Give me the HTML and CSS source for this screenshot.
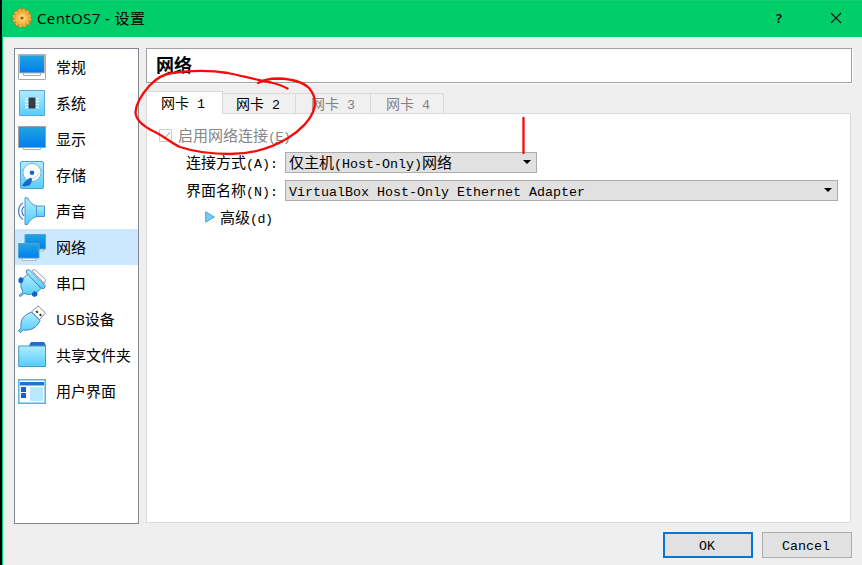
FILE: index.html
```html
<!DOCTYPE html>
<html lang="zh-CN">
<head>
<meta charset="utf-8">
<title>CentOS7 - 设置</title>
<link rel="stylesheet" href="styles.css">
</head>
<body>
<svg class="defs" width="0" height="0" aria-hidden="true">
  <defs>
    <linearGradient id="screen" x1="0" y1="0" x2="0" y2="1"><stop offset="0" stop-color="#22a5df"/><stop offset="1" stop-color="#007df0"/></linearGradient>
    <linearGradient id="light" x1="0" y1="0" x2="0" y2="1"><stop offset="0" stop-color="#b0ecff"/><stop offset="1" stop-color="#55cdff"/></linearGradient>
  </defs>
</svg>
<div class="window">
  <header class="titlebar">
    <svg class="app-icon" width="20" height="20" viewBox="0 0 20 20">
      <circle cx="10" cy="10" r="8.200" fill="none" stroke="#d9701c" stroke-width="3" stroke-dasharray="3.600 .693"/>
      <circle cx="10" cy="10" r="8" fill="none" stroke="#ffb545" stroke-width="2" stroke-dasharray="2.900 1.289"/>
      <circle cx="10" cy="10" r="7" fill="#ffb941" stroke="#f5a233"/>
      <circle cx="10" cy="10" r="4.500" fill="#ffd06c" stroke="#f8b54c"/>
      <circle cx="10" cy="10" r="1.600" fill="#a8521c"/>
    </svg>
    <h1 class="title">CentOS7 - 设置</h1>
    <span class="help">?</span>
    <svg class="close" width="12" height="12" viewBox="0 0 12 12"><path d="M1 1l10 10M11 1L1 11" stroke="#111" stroke-width="1.100"/></svg>
  </header>
  <div class="content">
    <nav class="sidebar">
      <a class="item"><svg width="28" height="28" viewBox="0 0 28 28"><path d="M.5 1.500h27v25H.5z" fill="#fff" stroke="#a8a8a8"/><path d="M1.500 2h25v18h-25z" fill="url(#screen)" stroke="#c2b9b2"/><path d="M5.500 20.500v2h17v-2" fill="none" stroke="#aaa"/></svg>常规</a>
      <a class="item"><svg width="28" height="28" viewBox="0 0 28 28"><path d="M1.500 1.500h25v25h-25z" fill="url(#light)" stroke="#5ca6d8"/><path d="M7 9.500h14M7 12.500h14M7 15.500h14M7 18.500h14" stroke="#e8faff" stroke-width="1.300"/><path d="M10.500 8.500h7v11h-7z" fill="#353d48"/></svg>系统</a>
      <a class="item"><svg width="28" height="28" viewBox="0 0 28 28"><path d="M5.500 21h17v3.500h-17z" fill="#fff" stroke="#aaa"/><path d="M.5 1.500h27v21H.5z" fill="url(#screen)" stroke="#9ba0a5"/></svg>显示</a>
      <a class="item"><svg width="28" height="28" viewBox="0 0 28 28"><rect x="2.500" y=".5" width="23" height="27" rx="1.500" fill="url(#light)" stroke="#4f9fd8"/><circle cx="14" cy="11.500" r="9" fill="#fff" stroke="#78b7db"/><path d="M13 16.500c-2 .5-5 3-6.500 4.500L4 24.500l2 1 5-1c2-1.500 3-4 3-6.500z" fill="#1969cb"/><path d="M14 17.500c4-.5 6-3 7-5.500" fill="none" stroke="#b8dcf2"/><circle cx="14" cy="11.800" r="2.300" fill="#1667c6"/></svg>存储</a>
      <a class="item"><svg width="28" height="28" viewBox="0 0 28 28"><g stroke="#4a96cd" fill="url(#light)"><path d="M16 9h10.500v10.500H16z"/><path d="M7 .8h2.500C11 4.500 14 7.500 18.500 9v10.500C14 21 11 24 9.500 27.500H7z"/></g><path d="M5 6C-.8 9-.8 19 5 22.500M6 9.500c-2.800 2-2.800 7 0 9.500" fill="none" stroke="#4186bd" stroke-width="1.300"/></svg>声音</a>
      <a class="item active"><svg width="28" height="28" viewBox="0 0 28 28"><path d="M20 16h6v2h-6zM4 25h14v2.500H4z" fill="#fff" stroke="#a9b6bf"/><g stroke="#5ba1cb"><path d="M7 1.500h20.500v14.500H7z" fill="url(#screen)"/><path d="M.5 10.500h20.500v14.500H.5z" fill="url(#screen)"/></g></svg>网络</a>
      <a class="item"><svg width="28" height="28" viewBox="0 0 28 28"><path d="M14 1.500L16.500.5l11 10-1 4z" fill="#fff" stroke="#999"/><path d="M10.500 5C5 8 2.500 12 3 18l2 5-4 3.500 1.500 1L6 24.500c6 2 12 1 17-5z" fill="url(#light)" stroke="#4087c0"/><path d="M8.500 1.500l2.500-1 16.500 16.500-2 3-3-1.500L8.500 4z" fill="url(#light)" stroke="#4087c0"/><path d="M.5 10l2-2 3 1.500-.5 3.500-2.500 1.500L.5 13zM14 24l2.500-2 3 2-.5 3-3 1-2-1.500z" fill="#1261cf"/></svg>串口</a>
      <a class="item"><svg width="28" height="28" viewBox="0 0 28 28"><path d="M13.500 7L20 .8l7.500 7-6 7z" fill="#fff" stroke="#888"/><path d="M3 23L.5 26l2 1.500L5 25c9 1 14-3 17-9.500L13.500 7C6 10 2 14 3 23z" fill="url(#light)" stroke="#3f85b9"/><path d="M17.500 6.500l1.500-1 1.500 1.500-1.500 1.500zm3.500 3l1.500-1L24 10l-1.500 1.500z" fill="#333"/></svg>USB设备</a>
      <a class="item"><svg width="28" height="28" viewBox="0 0 28 28"><path d="M11.500 5L13 1.500h13L27.500 5z" fill="#246bd0" stroke="#246bd0"/><path d="M.7 5h26.800v20.500H.7z" fill="url(#light)" stroke="#4799c9"/></svg>共享文件夹</a>
      <a class="item"><svg width="28" height="28" viewBox="0 0 28 28"><path d="M.8 2.800h26.400v23.500H.8z" fill="#fff" stroke="#5aaee2" stroke-width="1.500"/><path d="M2 5h24v3.500H2z" fill="#2871cd"/><path d="M3 10h5v5H3zm0 6h5v5H3z" fill="#1263cb"/><path d="M12 10h13v14H12z" fill="#b8eaff"/></svg>用户界面</a>
    </nav>
    <main class="settings">
      <h2 class="heading">网络</h2>
      <div class="tabs">
        <span class="tab current">网卡<b>1</b></span>
        <span class="tab">网卡<b>2</b></span>
        <span class="tab disabled">网卡<b>3</b></span>
        <span class="tab disabled last">网卡<b>4</b></span>
      </div>
      <section class="pane">
        <div class="row enable">
          <svg class="check" width="13" height="13" viewBox="0 0 13 13"><path d="M.5.500h12v12H.5z" fill="#fff" stroke="#ccc"/><path d="M2.500 6.500l3 3 5.500-6" fill="none" stroke="#b9b9b9" stroke-width="1.200"/></svg>
          <span>启用网络连接<b>(<u>E</u>)</b></span>
        </div>
        <div class="row field">
          <span class="label">连接方式<b>(A):</b></span>
          <div class="combo short"><span>仅主机<b>(Host-Only)</b>网络</span><i class="arrow"></i></div>
        </div>
        <div class="row field">
          <span class="label">界面名称<b>(N):</b></span>
          <div class="combo long"><span><b>VirtualBox Host-Only Ethernet Adapter</b></span><i class="arrow"></i></div>
        </div>
        <div class="row advanced">
          <svg width="10" height="12" viewBox="0 0 10 12"><path d="M.7.800L9.300 6 .7 11.200z" fill="#72ccf7" stroke="#4aa3e0"/></svg>
          <span>高级<b>(d)</b></span>
        </div>
      </section>
    </main>
  </div>
  <footer class="actions">
    <button class="button primary">OK</button>
    <button class="button">Cancel</button>
  </footer>
</div>
<svg class="marks" width="862" height="565" viewBox="0 0 862 565" fill="none" stroke="#f60a0a" stroke-width="2.300" stroke-linecap="round" stroke-linejoin="round">
  <path d="M258 83C265 79 271 78.500 278 78.500C293 79 303 82 309 88C315 95 316.500 103 313 112C309 122 299 131 288 138C270 149 252 154 230 154C212 154 195 152 180 147C171 143 164 136 153 131C143 126 135.500 120 135.500 112C136 103 142 94 150 85C157 78 164 74 172 73C190 70.500 212 70.500 228 73C242 76 258 80 271 82.500C277 84 283 86 287.500 88.500"/>
  <path d="M523.500 118V153"/>
</svg>
</body>
</html>
```

FILE: styles.css
```css
* { box-sizing: border-box; }

body {
  margin: 0;
  background: #000;
  color: #000;
  font: 15px/20px "Noto Sans CJK SC", sans-serif;
}

.defs { position: absolute; }

.window {
  height: 565px;
  margin-left: 2px;
  border-left: 1px solid #00ce6b;
  background: #efefef;
  overflow: hidden;
}

.titlebar {
  display: flex;
  align-items: center;
  height: 37px;
  padding: 0 20px 2px 9px;
  border-top: 1px solid #18cd77;
  background: #00ce6b;
}

.title {
  flex: 1;
  margin: 0 0 0 5px;
  font: 15px/20px "Open Sans", "Noto Sans CJK SC", sans-serif;
  letter-spacing: .4px;
}

.help {
  margin-right: 48px;
  font: 600 13px/20px "Open Sans", sans-serif;
}

.content {
  display: flex;
  gap: 7px;
  padding: 11px 10px 0 11px;
}

.sidebar {
  width: 125px;
  height: 476px;
  border: 1px solid #828790;
  background: #fff;
}

.item {
  display: flex;
  align-items: center;
  gap: 10px;
  height: 36px;
  padding-left: 3px;
  font-family: "Open Sans", "Noto Sans CJK SC", sans-serif;
  white-space: nowrap;
}

.item svg { flex: none; }
.item.active { background: #cce8ff; }

.settings { width: 706px; }

.heading {
  height: 35px;
  margin: 0;
  padding: 3px 0 0 9px;
  border: 1px solid #a0a0a0;
  background: #fff;
  box-shadow: 1px 1px 0 #fff;
  font-size: 18px;
  line-height: 24px;
}

.tabs {
  display: flex;
  align-items: flex-end;
  height: 31px;
  margin-bottom: -1px;
}

.tab {
  width: 73px;
  height: 21px;
  padding-left: 13px;
  border: 1px solid #d9d9d9;
  border-left: 0;
  background: #f0f0f0;
  font-size: 14px;
  line-height: 18px;
  white-space: nowrap;
}

.tab b { margin-left: 8px; }

.tab.current {
  width: 77px;
  height: 23px;
  padding-left: 14px;
  border-left: 1px solid #d9d9d9;
  border-bottom: 0;
  background: #fff;
  line-height: 20px;
  position: relative;
}

.tab.disabled {
  width: 75px;
  padding-left: 15px;
  color: #838383;
}

.tab.disabled.last { width: 73px; }

b {
  font: 13.333px/1 "Liberation Mono", monospace;
}

.pane {
  width: 705px;
  height: 410px;
  padding-top: 11px;
  border: 1px solid #dadada;
  background: #fff;
}

.row {
  display: flex;
  align-items: center;
}

.enable {
  gap: 6px;
  height: 20px;
  padding-left: 12px;
  color: #858585;
}

.enable b { letter-spacing: -.5px; }

.field {
  height: 21px;
  margin-top: 7px;
}

.field + .field { margin-top: 7px; }

.label {
  width: 138px;
  padding-left: 39px;
  line-height: 18px;
  white-space: nowrap;
}

.combo {
  display: flex;
  align-items: center;
  justify-content: space-between;
  height: 21px;
  padding: 0 5px 0 3px;
  border: 1px solid #acacac;
  background: #e1e1e1;
  line-height: 18px;
  white-space: nowrap;
}

.combo > span { margin-top: -1px; }
.combo.short { width: 252px; }
.combo.long { width: 553px; }

.arrow {
  margin-top: -1px;
  border: 4px solid transparent;
  border-top-color: #000;
  border-bottom: 0;
}

.advanced {
  gap: 5px;
  height: 20px;
  margin-top: 6px;
  padding-left: 58px;
}

.advanced b { letter-spacing: -.5px; }

.actions {
  display: flex;
  justify-content: flex-end;
  gap: 9px;
  padding: 8px 10px 0 0;
}

.button {
  width: 90px;
  height: 26px;
  padding: 3px 2px 0 0;
  border: 1px solid #adadad;
  background: #e1e1e1;
  color: #000;
  font: 13.333px/16px "Liberation Mono", monospace;
}

.button.primary { border: 2px solid #0078d7; }

.marks {
  position: absolute;
  top: 0;
  left: 0;
  pointer-events: none;
}
```
